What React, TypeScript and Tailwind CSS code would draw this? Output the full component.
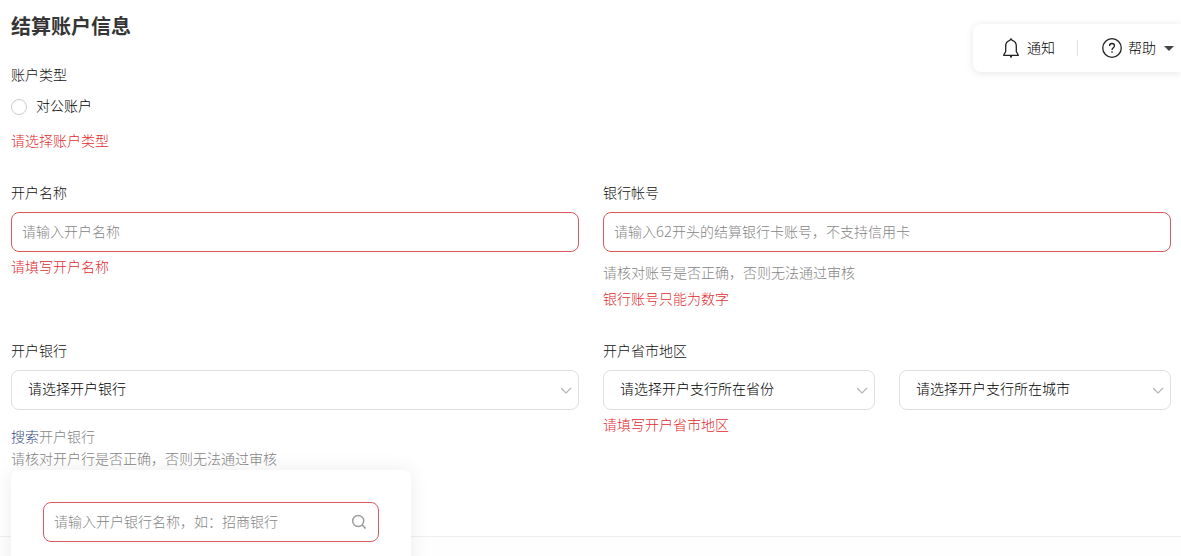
import type { ReactNode } from 'react'

const inputClass =
  'h-10 w-full rounded-lg border border-[#d9595f] bg-white px-2.5 pb-0.5 text-sm text-[#111] outline-none placeholder:text-[#858585]'

function BellIcon() {
  return (
    <svg viewBox="0 0 18 20" className="h-5 w-[18px]" fill="none" stroke="#222" strokeWidth="1.3" aria-hidden="true">
      <path
        d="M9 .8 7.800 2.400C5.300 3.200 3.700 5.300 3.700 8v5.500L1.600 17.300h14.800L14.300 13.500V8c0-2.700-1.600-4.800-4.100-5.600Z"
        strokeLinejoin="round"
      />
      <path d="M8 18.700h2" strokeWidth="1.600" />
    </svg>
  )
}

function HelpIcon() {
  return (
    <svg viewBox="0 0 20 20" className="size-5" fill="none" stroke="#222" strokeWidth="1.3" aria-hidden="true">
      <circle cx="10" cy="10" r="9.300" />
      <path d="M7.500 8c0-1.500 1-2.500 2.500-2.500s2.500 1 2.500 2.300c0 1.900-2.500 2-2.500 4.200" />
      <path d="M10 13.300v1.500" />
    </svg>
  )
}

function SearchIcon() {
  return (
    <svg viewBox="0 0 16 16" className="size-4" fill="none" stroke="#9a9a9a" strokeWidth="1.400" aria-hidden="true">
      <circle cx="7.200" cy="7" r="5.500" />
      <path d="m11.200 11 3.400 3.500" strokeWidth="1.700" />
    </svg>
  )
}

function ErrorText({ children, className = 'mt-1' }: { children: ReactNode; className?: string }) {
  return <p className={`text-[#e02c30] ${className}`}>{children}</p>
}

function Select({ id, label, placeholder }: { id: string; label?: string; placeholder: string }) {
  return (
    <div className="relative flex-1">
      <select
        id={id}
        aria-label={label}
        className="h-10 w-full appearance-none rounded-lg border border-[#dfdfdf] bg-white pr-8 pb-0.5 pl-4 text-sm text-black outline-none"
      >
        <option>{placeholder}</option>
      </select>
      <svg
        viewBox="0 0 12 8"
        className="pointer-events-none absolute top-4 right-[7px] h-2 w-3"
        fill="none"
        stroke="#b5b5b5"
        strokeWidth="1.200"
        aria-hidden="true"
      >
        <path d="m1 2 5 5 5-5" />
      </svg>
    </div>
  )
}

function Toolbar() {
  return (
    <div className="absolute top-6 right-0 flex h-12 items-center rounded-l-lg bg-white pr-[7px] pl-[29px] text-black shadow-[0_1px_8px_rgba(0,0,0,0.1)]">
      <button type="button" className="flex items-center gap-[7px]">
        <BellIcon />
        通知
      </button>
      <span className="mr-6 ml-[22px] h-4 w-px bg-[#e2e2e2]" />
      <button type="button" className="flex items-center">
        <HelpIcon />
        <span className="mr-2 ml-1.5">帮助</span>
        <svg viewBox="0 0 10 5" className="h-[5px] w-2.5" fill="#444" aria-hidden="true">
          <path d="M0 0h10L5 5z" />
        </svg>
      </button>
    </div>
  )
}

function BankSearch() {
  return (
    <div className="absolute top-full left-0 w-[400px] rounded-lg bg-white p-8 shadow-[0_0_20px_rgba(0,0,0,0.08)]">
      <div className="relative">
        <input
          type="text"
          aria-label="搜索开户银行"
          placeholder="请输入开户银行名称，如：招商银行"
          className={inputClass}
        />
        <button type="button" aria-label="搜索" className="absolute top-3 right-3">
          <SearchIcon />
        </button>
      </div>
    </div>
  )
}

export default function App() {
  return (
    <div className="relative flex min-h-screen flex-col overflow-hidden bg-white font-['Noto_Sans','Noto_Sans_CJK_SC',sans-serif] text-sm leading-[22px] font-light text-[#111]">
      <form className="pt-[13px] pr-2.5 pb-[66px] pl-[11px]">
        <h1 className="text-xl leading-7 font-bold text-[#353535]">结算账户信息</h1>

        <fieldset className="mt-[23px]">
          <legend>账户类型</legend>
          <label className="mt-[9px] flex w-fit items-center gap-[9px] text-black">
            <input
              type="radio"
              name="accountType"
              className="mt-0.5 size-4 appearance-none rounded-full border border-[#ccc] bg-white checked:border-4 checked:border-[#576b95]"
            />
            对公账户
          </label>
          <ErrorText className="mt-[13px]">请选择账户类型</ErrorText>
        </fieldset>

        <div className="mt-[30px] grid grid-cols-2 gap-6">
          <div>
            <label htmlFor="account-name" className="mb-2 block">
              开户名称
            </label>
            <input id="account-name" type="text" placeholder="请输入开户名称" className={inputClass} />
            <ErrorText>请填写开户名称</ErrorText>
          </div>
          <div>
            <label htmlFor="account-number" className="mb-2 block">
              银行帐号
            </label>
            <input
              id="account-number"
              type="text"
              placeholder="请输入62开头的结算银行卡账号，不支持信用卡"
              className={inputClass}
            />
            <p className="mt-2.5 text-[#858585]">请核对账号是否正确，否则无法通过审核</p>
            <ErrorText>银行账号只能为数字</ErrorText>
          </div>
        </div>

        <div className="mt-[30px] grid grid-cols-2 gap-6">
          <div className="relative">
            <label htmlFor="bank" className="mb-2 block">
              开户银行
            </label>
            <Select id="bank" placeholder="请选择开户银行" />
            <p className="mt-4 text-[#858585]">
              <a href="#bank-search" className="text-[#2f4a80]">
                搜索
              </a>
              开户银行
            </p>
            <p className="text-[#858585]">请核对开户行是否正确，否则无法通过审核</p>
            <BankSearch />
          </div>
          <div>
            <label htmlFor="province" className="mb-2 block">
              开户省市地区
            </label>
            <div className="flex gap-6">
              <Select id="province" placeholder="请选择开户支行所在省份" />
              <Select id="city" label="城市" placeholder="请选择开户支行所在城市" />
            </div>
            <ErrorText>请填写开户省市地区</ErrorText>
          </div>
        </div>
      </form>
      <footer className="flex-1 border-t border-[#eee] bg-[#fefefe]" />
      <Toolbar />
    </div>
  )
}
